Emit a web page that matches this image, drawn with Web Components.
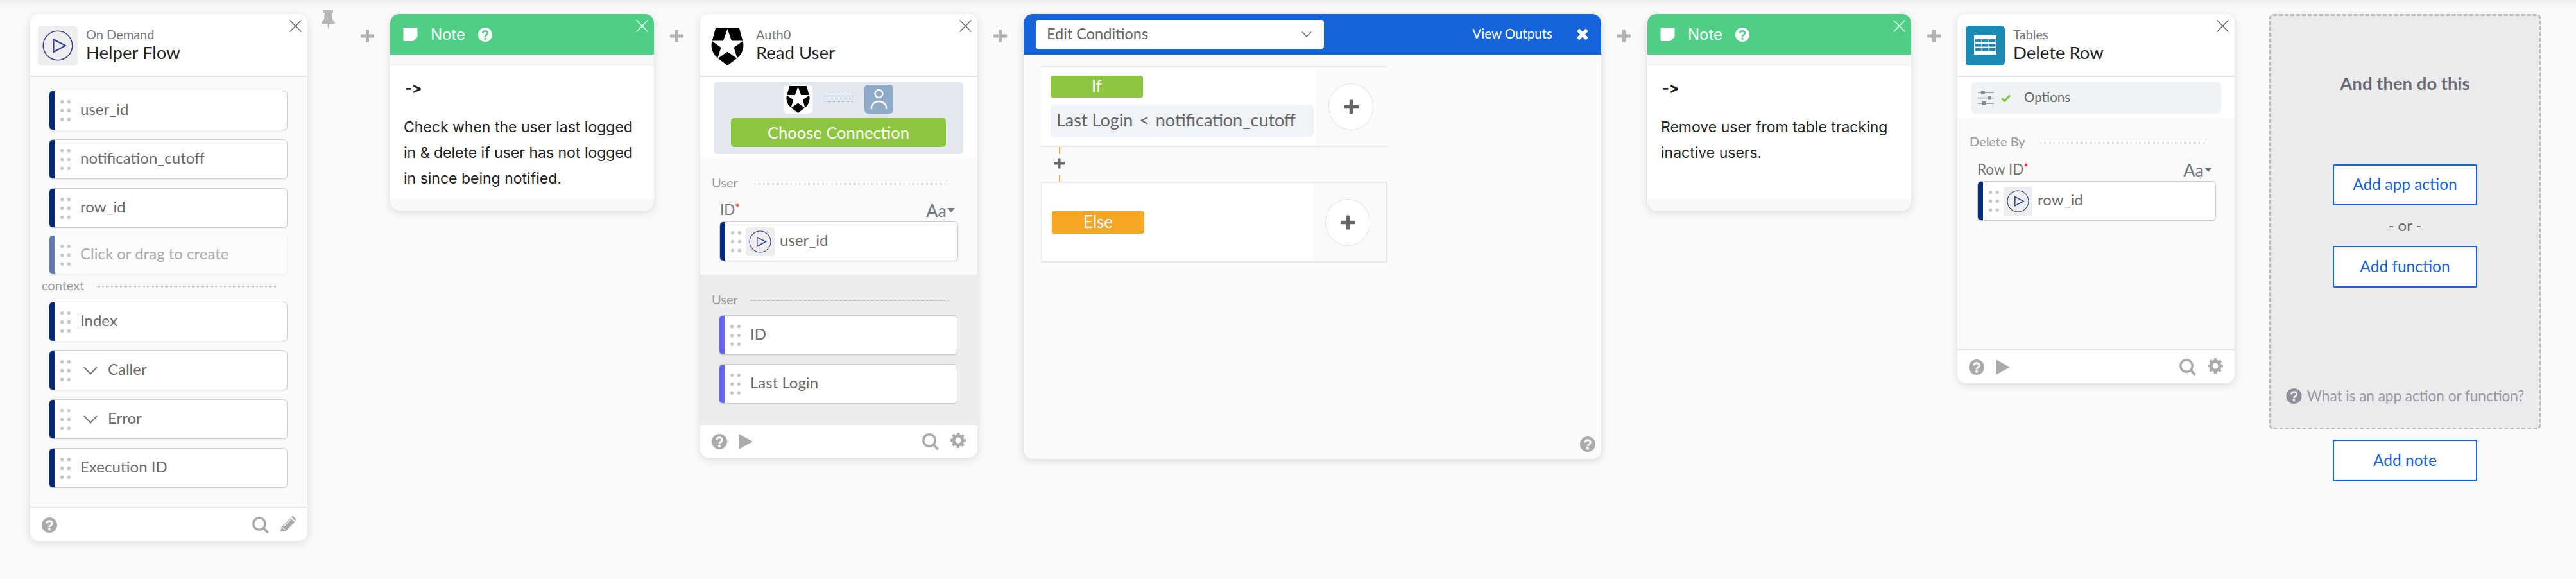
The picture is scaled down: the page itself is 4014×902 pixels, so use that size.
<!DOCTYPE html>
<html lang="en">
<head>
<meta charset="utf-8">
<title>Helper Flow</title>
<style>
html,body{margin:0;padding:0;background:#fafafa;}
body{font-family:Lato,"Liberation Sans",sans-serif;}
</style>
</head>
<body>
<flow-canvas>
  <step-card app="On Demand" name="Helper Flow" h="821" pad="12" tgap="13" tools="edit">
    <ui-icon slot="icon" name="trigger" style="width:62px;height:62px"></ui-icon>
    <field-stack top="22" left="30">
      <field-row label="user_id"></field-row>
      <field-row label="notification_cutoff"></field-row>
      <field-row label="row_id"></field-row>
      <field-row label="Click or drag to create" ghost style="margin-top:-3px"></field-row>
    </field-stack>
    <section-label text="context" left="18" right="47" style="margin-top:6px"></section-label>
    <field-stack top="14" left="30">
      <field-row label="Index"></field-row>
      <field-row label="Caller" expand></field-row>
      <field-row label="Error" expand></field-row>
      <field-row label="Execution ID"></field-row>
    </field-stack>
  </step-card>
  <plus-gap pin></plus-gap>

  <note-card lead="-&gt;" text="Check when the user last logged in &amp; delete if user has not logged in since being notified."></note-card>
  <plus-gap></plus-gap>

  <step-card app="Auth0" name="Read User" h="691" pad="17" tgap="19" tools="gear" play>
    <ui-icon slot="icon" name="auth0" style="width:51px;height:58px;margin-top:4px"></ui-icon>
    <connection-panel></connection-panel>
    <section-label text="User" left="18" right="45" style="margin-top:26px"></section-label>
    <field-head label="ID" style="margin-top:16px"></field-head>
    <field-stack top="5" left="31">
      <field-row label="user_id" chip></field-row>
    </field-stack>
    <output-block>
      <section-label text="User" left="18" right="45"></section-label>
      <field-stack top="13" left="30">
        <field-row label="ID" tint></field-row>
        <field-row label="Last Login" tint></field-row>
      </field-stack>
    </output-block>
  </step-card>
  <plus-gap></plus-gap>

  <condition-card></condition-card>
  <plus-gap></plus-gap>

  <note-card lead="-&gt;" text="Remove user from table tracking inactive users."></note-card>
  <plus-gap></plus-gap>

  <step-card app="Tables" name="Delete Row" h="575" pad="13" tgap="13" tools="gear" play>
    <ui-icon slot="icon" name="tables" style="width:61px;height:62px"></ui-icon>
    <options-panel></options-panel>
    <section-label text="Delete By" left="19" right="44" style="margin-top:25px"></section-label>
    <field-head label="Row ID" style="margin-top:17px"></field-head>
    <field-stack top="5" left="32">
      <field-row label="row_id" chip></field-row>
    </field-stack>
  </step-card>
  <plus-gap none style="width:54px"></plus-gap>

  <action-panel></action-panel>
</flow-canvas>

<script>
const I = {
  close:`<svg viewBox="0 0 19 19"><path d="M.5.5l18 18M18.5.5l-18 18" fill="none" stroke="currentColor" stroke-width="1.3"/></svg>`,
  help:`<svg viewBox="0 0 24 24"><circle cx="12" cy="12" r="12" fill="currentColor"/><path d="M7.8 9.4C8 4.6 16.2 4.6 16.2 9.3c0 3.3-4.2 3-4.2 6" fill="none" stroke="var(--hole,#fff)" stroke-width="3"/><rect x="10.2" y="17" width="3.6" height="3.4" fill="var(--hole,#fff)"/></svg>`,
  search:`<svg viewBox="0 0 26 26"><circle cx="11" cy="11" r="9.2" fill="none" stroke="currentColor" stroke-width="3.4"/><path d="M17.5 17.5l7 7.5" stroke="currentColor" stroke-width="3.8" fill="none"/></svg>`,
  pencil:`<svg viewBox="0 0 24 24"><path d="M0 24l1.6-7L15.6 3l6.6 6.6L8.2 23.5z" fill="currentColor"/><path d="M17 1.6l1.4-1.3c.5-.4 1.1-.4 1.6 0l3.7 3.7c.4.5.4 1.1 0 1.6L23.4 7.9z" fill="currentColor"/><path d="M3.4 17.6l3.4 3.4M5.5 15.5l10-10" stroke="#fff" stroke-width="1.1"/></svg>`,
  gear:`<svg viewBox="0 0 24 24"><circle cx="12" cy="12" r="7" fill="none" stroke="currentColor" stroke-width="5"/><circle cx="12" cy="12" r="10" fill="none" stroke="currentColor" stroke-width="4" stroke-dasharray="4.2 3.65" stroke-dashoffset="2.1"/></svg>`,
  play:`<svg viewBox="0 0 22 24"><path d="M0 0l22 12L0 24z" fill="currentColor"/></svg>`,
  pin:`<svg viewBox="0 0 21 30"><path d="M3 0h15v4h-2l1 10 4 5v2H0v-2l4-5 1-10H3z" fill="currentColor"/><path d="M9.3 21h2.4L10.5 30z" fill="currentColor"/></svg>`,
  plus:`<svg viewBox="0 0 21 20"><path d="M8 1a1 1 0 011-1h3a1 1 0 011 1v6.500h7a1 1 0 011 1v3a1 1 0 01-1 1h-7V19a1 1 0 01-1 1H9a1 1 0 01-1-1v-6.500H1a1 1 0 01-1-1v-3a1 1 0 011-1h7z" fill="currentColor"/></svg>`,
  trigger:`<svg viewBox="0 0 62 62"><rect width="62" height="62" rx="5" fill="#eeeeee"/><circle cx="31" cy="31" r="22.7" fill="none" stroke="#2d3d8f" stroke-width="1.5"/><path d="M24.5 21.5L43 31 24.5 41z" fill="none" stroke="#2d3d8f" stroke-width="2"/></svg>`,
  auth0:`<svg viewBox="0 0 51 58"><path d="M7 0H44L50 22C51.500 30 49 40 40 47L25.500 58 11 47C2 40-.5 30 1 22z" fill="#000"/><path d="M25.500 1L32 19.500H50L35.500 30 41 47.500 25.500 36.500 10 47.500 15.500 30 1 19.500H19z" fill="#fff"/></svg>`,
  person:`<svg viewBox="0 0 45 45"><circle cx="22.500" cy="14" r="6" fill="none" stroke="#fff" stroke-width="2.400"/><path d="M11 38v-2c0-6 5-10 11.500-10S34 30 34 36v2" fill="none" stroke="#fff" stroke-width="2.400"/></svg>`,
  note:`<svg viewBox="0 0 23 22"><path d="M2 0h19a2 2 0 012 2v13l-7 7H2a2 2 0 01-2-2V2a2 2 0 012-2z" fill="currentColor"/><path d="M22 16h-5v5" fill="none" stroke="currentColor" stroke-width="1.600"/></svg>`,
  tables:`<svg viewBox="0 0 61 62"><rect width="61" height="62" rx="6" fill="#1b8ab6"/><rect x="13" y="15" width="35" height="30" rx="1" fill="#fff"/><g fill="#1b8ab6"><rect x="15" y="21" width="9.500" height="4.600"/><rect x="26" y="21" width="9.500" height="4.600"/><rect x="37" y="21" width="9.500" height="4.600"/><rect x="15" y="28" width="9.500" height="4.600"/><rect x="26" y="28" width="9.500" height="4.600"/><rect x="37" y="28" width="9.500" height="4.600"/><rect x="15" y="35" width="9.500" height="4.600"/><rect x="26" y="35" width="9.500" height="4.600"/><rect x="37" y="35" width="9.500" height="4.600"/></g></svg>`,
  sliders:`<svg viewBox="0 0 25 23"><g stroke="#8a8a8a" stroke-width="1.400"><path d="M0 3h25M0 11.500h25M0 20h25"/></g><g fill="#8a8a8a"><rect x="5" y="0" width="6" height="6"/><rect x="15" y="8.500" width="6" height="6"/><rect x="7" y="17" width="6" height="6"/></g></svg>`,
  check:`<svg viewBox="0 0 15 12"><path d="M1 6l4.500 4.500L14 1.500" fill="none" stroke="#7ec13c" stroke-width="3"/></svg>`,
  chev:`<svg viewBox="0 0 22 13"><path d="M1 1l10 10.500L21 1" fill="none" stroke="currentColor" stroke-width="2"/></svg>`,
  dots:`<svg viewBox="0 0 16 33"><g fill="#c8c8c8"><circle cx="2.700" cy="2.700" r="2.700"/><circle cx="13.300" cy="2.700" r="2.700"/><circle cx="2.700" cy="16.500" r="2.700"/><circle cx="13.300" cy="16.500" r="2.700"/><circle cx="2.700" cy="30.300" r="2.700"/><circle cx="13.300" cy="30.300" r="2.700"/></g></svg>`,
  xbold:`<svg viewBox="0 0 20 19"><path d="M3 2.500l14 14M17 2.500l-14 14" stroke="currentColor" stroke-width="5.500" fill="none"/></svg>`
};

function comp(tag, css, render){
  customElements.define(tag, class extends HTMLElement{
    connectedCallback(){
      if(this.shadowRoot) return;
      const r = this.attachShadow({mode:'open'});
      r.innerHTML = `<style>${css}</style>` + render(this);
    }
  });
}

comp('ui-icon', `:host{display:inline-flex;flex:none}svg{width:100%;height:100%;display:block}`, el => I[el.getAttribute('name')]);

comp('flow-canvas', `
  :host{display:block;width:4014px;height:902px;box-sizing:border-box;overflow:hidden;
    background:linear-gradient(#eeeeee 0,#f4f4f4 5px,#fafafa 13px);}
  .row{display:flex;align-items:flex-start;padding:22px 0 0 47px;}
`, () => `<div class="row"><slot></slot></div>`);

comp('plus-gap', `
  :host{display:block;flex:none;width:72px;height:70px;position:relative;}
  :host([pin]){width:129px;}
  .plus{position:absolute;left:25px;top:24px;width:21px;height:20px;color:#b2b2b2;}
  :host([pin]) .plus{left:83px;}
  .pin{position:absolute;left:22px;top:-6px;width:21px;height:30px;color:#b8b8b8;}
`, el => (el.hasAttribute('none')?'':`<ui-icon class="plus" name="plus"></ui-icon>`) + (el.hasAttribute('pin')?`<ui-icon class="pin" name="pin"></ui-icon>`:''));

comp('step-card', `
  :host{display:flex;flex-direction:column;flex:none;width:432px;box-sizing:border-box;background:#fafafa;border-radius:14px;
    box-shadow:0 3px 14px rgba(0,0,0,.13);position:relative;font-family:Lato,"Liberation Sans",sans-serif;}
  header{display:flex;align-items:flex-start;height:98px;flex:none;box-sizing:border-box;padding-top:18px;background:#fff;border-bottom:2px solid #e6e6e6;border-radius:14px 14px 0 0;}
  .t{display:flex;flex-direction:column;}
  .a{font-size:20px;line-height:26px;color:#777780;}
  .n{font-size:27.500px;line-height:32px;color:#222;}
  .x{position:absolute;right:9px;top:9px;width:19px;height:19px;color:#555;}
  main{flex:1;min-height:0;display:flex;flex-direction:column;}
  footer{height:53px;flex:none;box-sizing:border-box;background:#fff;border-top:2px solid #e6e6e6;border-radius:0 0 14px 14px;display:flex;align-items:center;padding:0 18px;color:#aaaaaa;}
  .grow{flex:1}
  .q{width:24px;height:24px}.p{width:22px;height:24px;margin-left:18px}.s{width:26px;height:26px;margin-right:18px}.g{width:24px;height:24px;margin-bottom:3px}
`, el => { el.style.height = el.getAttribute('h')+'px';
  return `<header style="padding-left:${el.getAttribute('pad')}px;gap:${el.getAttribute('tgap')}px"><slot name="icon"></slot>
  <div class="t"><span class="a">${el.getAttribute('app')}</span><span class="n">${el.getAttribute('name')}</span></div></header>
  <ui-icon class="x" name="close"></ui-icon>
  <main><slot></slot></main>
  <footer><ui-icon class="q" name="help"></ui-icon>${el.hasAttribute('play')?'<ui-icon class="p" name="play"></ui-icon>':''}<span class="grow"></span>
  <ui-icon class="s" name="search"></ui-icon><ui-icon class="g" name="${el.getAttribute('tools')=='edit'?'pencil':'gear'}"></ui-icon></footer>`; });

comp('field-stack', `:host{display:flex;flex-direction:column;gap:16px;}`,
  el => { el.style.paddingTop=(el.getAttribute('top')||0)+'px'; el.style.paddingLeft=(el.getAttribute('left')||0)+'px'; return `<slot></slot>`; });

comp('field-row', `
  :host{display:flex;align-items:center;width:370px;height:60px;box-sizing:border-box;background:#fff;border-radius:5px;overflow:hidden;flex:none;
    box-shadow:0 0 0 1px #cfcfcf,0 1px 2px rgba(0,0,0,.2);font-size:24px;color:#6b6b6b;}
  .bar{width:8px;align-self:stretch;background:#022a7c;flex:none;}
  :host([tint]) .bar{background:#6666ff;}
  .dots{width:16px;height:33px;margin-left:9px;flex:none;}
  .lab{margin-left:15px;white-space:nowrap;position:relative;top:-3px;}
  .chev{width:22px;height:13px;margin-left:20px;color:#777;flex:none;}
  :host([expand]) .lab{margin-left:16px;}
  .chip{width:45px;height:45px;margin-left:7px;flex:none;}
  :host([chip]) .lab{margin-left:8px;}
  :host([ghost]){box-shadow:0 1px 3px rgba(0,0,0,.08);color:#aaa;background:#fcfcfc;}
  :host([ghost]) .bar{background:#6079b0;}
`, el => `<span class="bar"></span><ui-icon class="dots" name="dots"></ui-icon>
  ${el.hasAttribute('expand')?'<ui-icon class="chev" name="chev"></ui-icon>':''}
  ${el.hasAttribute('chip')?'<ui-icon class="chip" name="trigger"></ui-icon>':''}
  <span class="lab">${el.getAttribute('label')}</span>`);

comp('section-label', `
  :host{display:flex;align-items:center;height:24px;font-size:20px;color:#999;}
  span{position:relative;top:-1px;}
  i{flex:1;border-top:1px dotted #b4b4b4;margin-left:20px;margin-top:2px;}
`, el => { el.style.paddingLeft=el.getAttribute('left')+'px'; el.style.paddingRight=el.getAttribute('right')+'px';
  return `<span>${el.getAttribute('text')}</span><i></i>`; });

comp('field-head', `
  :host{display:flex;align-items:center;justify-content:space-between;height:28px;padding:0 35px 0 31px;font-size:22.500px;color:#777;}
  .l{position:relative;top:-1px;}
  b{color:#f00;font-weight:400;font-size:18px;position:relative;top:-5px;}
  .aa{font-size:27px;color:#6f7780;display:flex;align-items:center;}
  .aa i{display:block;width:0;height:0;border-left:6.500px solid transparent;border-right:6.500px solid transparent;border-top:7px solid #6f7780;margin-left:1px;}
`, el => `<span class="l">${el.getAttribute('label')}<b>*</b></span><span class="aa">Aa<i></i></span>`);

comp('output-block', `
  :host{display:block;flex:1;background:#ebecee;margin-top:22px;padding-top:27px;}
`, () => `<slot></slot>`);

comp('connection-panel', `
  :host{display:block;background:#fff;padding:8px 22px 7px 21px;}
  .p{background:#e3e8f0;border-radius:6px;height:112px;box-sizing:border-box;padding-top:4px;display:flex;flex-direction:column;align-items:center;}
  .top{display:flex;align-items:center;gap:18px;}
  .box{width:45px;height:45px;border-radius:6px;background:#fff;display:flex;align-items:center;justify-content:center;}
  .box.b{background:#90abca;}
  .ln{width:45px;height:8px;border-top:1px dotted #9fadc6;border-bottom:1px dotted #9fadc6;margin-top:-1px;}
  .btn{margin-top:7px;width:335px;height:45px;background:#8cc63f;border-radius:5px;color:#fff;font-size:25.500px;display:flex;align-items:center;justify-content:center;padding-bottom:2px;box-sizing:border-box;}
`, () => `<div class="p"><div class="top"><span class="box"><ui-icon name="auth0" style="width:37px;height:42px"></ui-icon></span><span class="ln"></span>
  <span class="box b"><ui-icon name="person" style="width:45px;height:45px"></ui-icon></span></div><div class="btn">Choose Connection</div></div>`);

comp('options-panel', `
  :host{display:block;background:#fff;padding:8px 21px 7px 22px;}
  .p{background:#eff3f6;border-radius:6px;height:49px;display:flex;align-items:center;padding-left:10px;font-size:20.500px;color:#666;}
`, () => `<div class="p"><ui-icon name="sliders" style="width:25px;height:23px"></ui-icon><ui-icon name="check" style="width:15px;height:12px;margin-left:11px"></ui-icon><span style="margin-left:21px;position:relative;top:-2px">Options</span></div>`);

comp('note-card', `
  :host{display:flex;flex-direction:column;flex:none;width:411px;height:306px;background:#f8f8f8;border-radius:14px;box-shadow:0 3px 14px rgba(0,0,0,.13);position:relative;font-family:Inter,"Liberation Sans",sans-serif;color:#222;font-variant-ligatures:none;font-feature-settings:"calt" 0,"liga" 0;}
  header{height:63px;background:#4fcf86;border-radius:14px 14px 0 0;display:flex;align-items:center;color:#fff;font-size:24px;padding-left:20px;box-sizing:border-box;}
  header span{margin-left:20px;}
  .x{position:absolute;right:9px;top:9px;width:19px;height:19px;color:#fff;}
  .body{background:#fff;margin-top:18px;height:207px;box-sizing:border-box;padding:14px 27px 0 21px;font-size:23px;line-height:40px;}
  .lead{font-weight:700;margin:0 0 21px 2px;}
  p{margin:0;}
`, el => `<header><ui-icon name="note" style="width:23px;height:21px;color:#fff"></ui-icon><span>Note</span>
  <ui-icon name="help" style="width:22px;height:22px;color:#fff;margin-left:20px;--hole:#4fcf86"></ui-icon></header>
  <ui-icon class="x" name="close"></ui-icon>
  <div class="body"><div class="lead">${el.getAttribute('lead').replace('>','&gt;')}</div><p>${el.getAttribute('text').replace('&','&amp;')}</p></div>`);

comp('add-circle', `
  :host{display:flex;flex:none;align-items:center;justify-content:center;width:70px;height:73px;border-radius:50%;border:1.500px dotted #c4c4c4;box-sizing:border-box;background:#fff;color:#666;}
`, () => `<ui-icon name="plus" style="width:23px;height:23px"></ui-icon>`);

comp('condition-card', `
  :host{display:flex;flex-direction:column;flex:none;width:900px;height:693px;background:#fafafa;border-radius:14px;box-shadow:0 3px 14px rgba(0,0,0,.14);font-family:Lato,"Liberation Sans",sans-serif;}
  header{height:63px;flex:none;background:#1763dc;border-radius:14px 14px 0 0;display:flex;align-items:center;padding:0 19px;color:#fff;box-sizing:border-box;font-size:20.500px;}
  .sel{width:449px;height:45px;background:#fff;border-radius:4px;color:#666;display:flex;align-items:center;justify-content:space-between;padding:0 19px 0 17px;box-sizing:border-box;font-size:23.500px;}
  .sel span{position:relative;top:-2px;}
  .vo{margin-left:auto;margin-right:37px;position:relative;top:-2px;}
  .body{flex:1;padding:18px 0 0 27px;}
  .br{width:540px;height:126px;display:flex;align-items:center;box-sizing:border-box;border-top:2px solid #e9e9e9;border-bottom:2px solid #e9e9e9;}
  .l{background:#fff;align-self:stretch;box-sizing:border-box;padding:13px 0 0 15px;}
  .if{width:429px;}
  .else{width:422px;display:flex;align-items:center;padding-top:0;}
  .b2{border-left:2px solid #e9e9e9;border-right:2px solid #e9e9e9;}
  .pill{width:144px;height:34px;border-radius:4px;color:#fff;font-size:26px;display:flex;align-items:center;justify-content:center;background:#8cc63f;padding-bottom:2px;box-sizing:border-box;}
  .pill.o{background:#f5a623;height:35px;}
  .cond{width:410px;height:50px;margin-top:11px;background:#f0f3f7;border-radius:5px;color:#666;font-size:27px;display:flex;align-items:center;padding:0 0 3px 9px;box-sizing:border-box;white-space:pre;}
  .cond em{font-style:normal;margin:0 3px;}
  add-circle{margin-left:19px;}
  .conn{width:57px;height:54px;display:flex;flex-direction:column;align-items:center;}
  .d{width:2px;height:11px;background:#f5a623;}
  .foot{display:flex;justify-content:flex-end;padding:0 9px 11px 0;}
`, () => `<header><div class="sel"><span>Edit Conditions</span><ui-icon name="chev" style="width:16px;height:9px;color:#666"></ui-icon></div>
  <span class="vo">View Outputs</span><ui-icon name="xbold" style="width:20px;height:19px;color:#fff"></ui-icon></header>
  <div class="body">
    <div class="br"><div class="l if"><div class="pill">If</div><div class="cond">Last Login <em>&lt;</em> notification_cutoff</div></div><add-circle></add-circle></div>
    <div class="conn"><span class="d"></span><ui-icon name="plus" style="width:17px;height:17px;color:#666;margin:6px 0 9px"></ui-icon><span class="d"></span></div>
    <div class="br b2"><div class="l else"><div class="pill o">Else</div></div><add-circle></add-circle></div>
  </div>
  <div class="foot"><ui-icon name="help" style="width:24px;height:24px;color:#aaa"></ui-icon></div>`);

comp('action-panel', `
  :host{display:flex;flex-direction:column;align-items:center;flex:none;width:423px;font-family:Lato,"Liberation Sans",sans-serif;}
  .p{width:100%;height:647px;box-sizing:border-box;background:#ebebed;border:3px dashed #bbbbbb;border-radius:6px;display:flex;flex-direction:column;align-items:center;padding:90px 0 34px;}
  h2{margin:0;font-size:27.500px;line-height:30px;font-weight:700;color:#6b6b76;}
  .b{width:225px;height:64px;box-sizing:border-box;background:#fff;border:2px solid #1763dc;border-radius:3px;color:#1763dc;font-size:24.500px;display:flex;align-items:center;justify-content:center;flex:none;padding-bottom:3px;}
  .or{height:63px;display:flex;align-items:center;font-size:24px;color:#666;padding-bottom:3px;box-sizing:border-box;}
  .w{margin-top:auto;display:flex;align-items:center;font-size:22.500px;line-height:30px;color:#999aa3;white-space:nowrap;}
`, () => `<div class="p"><h2>And then do this</h2><div class="b" style="margin-top:111px">Add app action</div><div class="or">- or -</div><div class="b" style="height:65px">Add function</div>
  <div class="w"><ui-icon name="help" style="width:25px;height:24px;color:#8f8f99;margin-right:8px;--hole:#ebebed"></ui-icon>What is an app action or function?</div></div>
  <div class="b" style="margin-top:16px;height:65px">Add note</div>`);
</script>
</body>
</html>
